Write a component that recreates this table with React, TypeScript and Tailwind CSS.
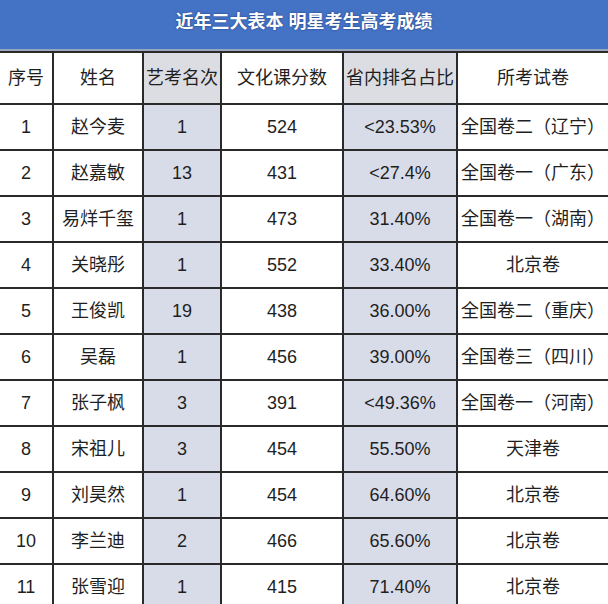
const rows = [
  ["1", "赵今麦", "1", "524", "<23.53%", "全国卷二（辽宁）"],
  ["2", "赵嘉敏", "13", "431", "<27.4%", "全国卷一（广东）"],
  ["3", "易烊千玺", "1", "473", "31.40%", "全国卷一（湖南）"],
  ["4", "关晓彤", "1", "552", "33.40%", "北京卷"],
  ["5", "王俊凯", "19", "438", "36.00%", "全国卷二（重庆）"],
  ["6", "吴磊", "1", "456", "39.00%", "全国卷三（四川）"],
  ["7", "张子枫", "3", "391", "<49.36%", "全国卷一（河南）"],
  ["8", "宋祖儿", "3", "454", "55.50%", "天津卷"],
  ["9", "刘昊然", "1", "454", "64.60%", "北京卷"],
  ["10", "李兰迪", "2", "466", "65.60%", "北京卷"],
  ["11", "张雪迎", "1", "415", "71.40%", "北京卷"],
];

const headers = ["序号", "姓名", "艺考名次", "文化课分数", "省内排名占比", "所考试卷"];
const widths = ["w-[53px]", "w-[90px]", "w-[78px]", "w-[122px]", "w-[114px]", "w-[151px]"];
const shaded = [false, false, true, false, true, false];

export default function App() {
  return (
    <div className="w-[608px] h-[604px] overflow-hidden bg-white text-[#1f1f1f] font-['Liberation_Sans','Noto_Sans_CJK_SC',sans-serif]">
      <div className="flex h-[49px] items-center justify-center bg-[#4472c4] pb-[4px] text-[18px] font-bold text-white [text-shadow:0_0_2px_#1d3a78]">
        近年三大表本 明星考生高考成绩
      </div>
      <div className="h-[2px] bg-[#9aa6bd]" />
      <table className="w-[608px] table-fixed border-collapse">
        <thead>
          <tr className="h-[52px] border-y-2 border-[#2a2a2a]">
            {headers.map((h, i) => (
              <th
                key={h}
                className={`${widths[i]} border-x-2 border-[#2a2a2a] p-0 text-[18px] font-normal whitespace-nowrap first:border-l-0 last:border-r-0 ${
                  shaded[i] ? "bg-[#dcdde3]" : "bg-white"
                }`}
              >
                {h}
              </th>
            ))}
          </tr>
        </thead>
        <tbody>
          {rows.map((r) => (
            <tr key={r[0]} className="h-[46px] border-b-2 border-[#2a2a2a]">
              {r.map((c, i) => (
                <td
                  key={i}
                  className={`border-x-2 border-[#2a2a2a] p-0 text-center text-[18px] whitespace-nowrap first:border-l-0 last:border-r-0 ${
                    shaded[i] ? "bg-[#d8dce9]" : "bg-white"
                  }`}
                >
                  {c}
                </td>
              ))}
            </tr>
          ))}
        </tbody>
      </table>
    </div>
  );
}
